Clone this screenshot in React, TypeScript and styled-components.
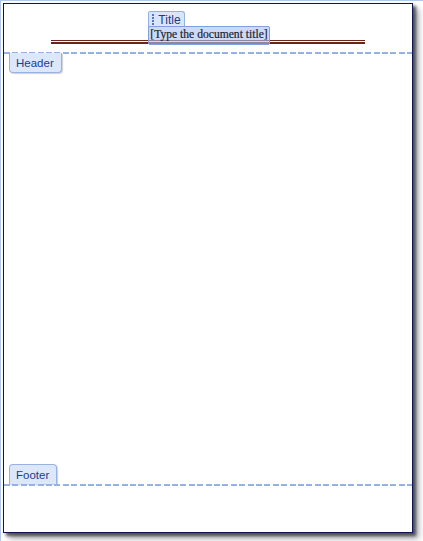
import styled, { createGlobalStyle } from "styled-components";

const GlobalStyle = createGlobalStyle`
  html, body {
    margin: 0;
    padding: 0;
    background: #ffffff;
  }
`;

const Viewport = styled.div`
  width: 423px;
  height: 541px;
  box-sizing: border-box;
  padding: 2px 0 0 2px;
  border-top: 1px solid #b3c7ec;
  border-left: 1px solid #b3c7ec;
  background: #ffffff;
`;

const Page = styled.div`
  width: 410px;
  height: 530px;
  box-sizing: border-box;
  border: 1px solid #0d1650;
  background: #ffffff;
  box-shadow: 3px 3px 3px rgba(40, 40, 50, 0.75), 6px 6px 6px rgba(90, 90, 100, 0.45);
  display: flex;
  flex-direction: column;
`;

const HeaderArea = styled.div`
  padding: 7px 0 8px 47px;
  width: 314px;
`;

const TitleLine = styled.div`
  display: flex;
  justify-content: center;
`;

const Control = styled.div`
  display: inline-flex;
  flex-direction: column;
  align-items: flex-start;
  position: relative;
  z-index: 1;
  margin-left: 2px;
`;

const TitleTab = styled.div`
  height: 16px;
  box-sizing: border-box;
  display: flex;
  align-items: center;
  gap: 4px;
  padding: 0 3px 0 3px;
  margin-bottom: -1px;
  background: #dae5f9;
  border: 1px solid #93b0e3;
  border-bottom: none;
  border-radius: 2px 3px 0 0;
  font-family: "Liberation Sans", Arial, sans-serif;
  font-size: 12px;
  color: #1b3b8c;
`;

const Grip = styled.span`
  width: 2px;
  height: 11px;
  background: repeating-linear-gradient(
    to bottom,
    #4f75cc 0 2px,
    transparent 2px 3px
  );
`;

const TitleBox = styled.div`
  height: 19px;
  box-sizing: border-box;
  padding: 0 1px;
  border: 1px solid #7f9fde;
  border-radius: 2px;
  background: rgba(170, 196, 242, 0.62);
  font-family: "Liberation Serif", "Times New Roman", serif;
  font-size: 11.6px;
  line-height: 16px;
  color: #222230;
  -webkit-text-stroke: 0.2px #222230;
  white-space: nowrap;
`;

const Rule = styled.div`
  margin-top: -5px;
  height: 1px;
  border-top: 1px solid #6a241c;
  border-bottom: 2px solid #6a241c;
`;

const Dashed = styled.div`
  height: 2px;
  flex-shrink: 0;
  background: repeating-linear-gradient(
    to right,
    #94b2e6 0 6px,
    transparent 6px 8.4px
  );
`;

const Tab = styled.div<{ $side: "top" | "bottom" }>`
  align-self: flex-start;
  margin-left: 5px;
  height: 20px;
  box-sizing: border-box;
  padding: 0 7px 0 6px;
  display: flex;
  align-items: center;
  background: #dce8fa;
  border: 1px solid #97b3e4;
  ${(p) =>
    p.$side === "bottom"
      ? "border-top: none; border-radius: 0 0 4px 4px; margin-top: -1px;"
      : "border-bottom: none; border-radius: 4px 4px 0 0;"}
  box-shadow: 1px 1px 1px rgba(120, 120, 130, 0.35);
  font-family: "Liberation Sans", Arial, sans-serif;
  font-size: 11.5px;
  color: #1b3b8c;
`;

const Body = styled.div`
  flex: 1;
`;

const FooterSpace = styled.div`
  height: 46px;
  flex-shrink: 0;
`;

export default function App() {
  return (
    <>
      <GlobalStyle />
      <Viewport>
        <Page>
          <HeaderArea>
            <TitleLine>
              <Control>
                <TitleTab>
                  <Grip />
                  Title
                </TitleTab>
                <TitleBox>[Type the document title]</TitleBox>
              </Control>
            </TitleLine>
            <Rule />
          </HeaderArea>
          <Dashed />
          <Tab $side="bottom">Header</Tab>
          <Body />
          <Tab $side="top">Footer</Tab>
          <Dashed />
          <FooterSpace />
        </Page>
      </Viewport>
    </>
  );
}
